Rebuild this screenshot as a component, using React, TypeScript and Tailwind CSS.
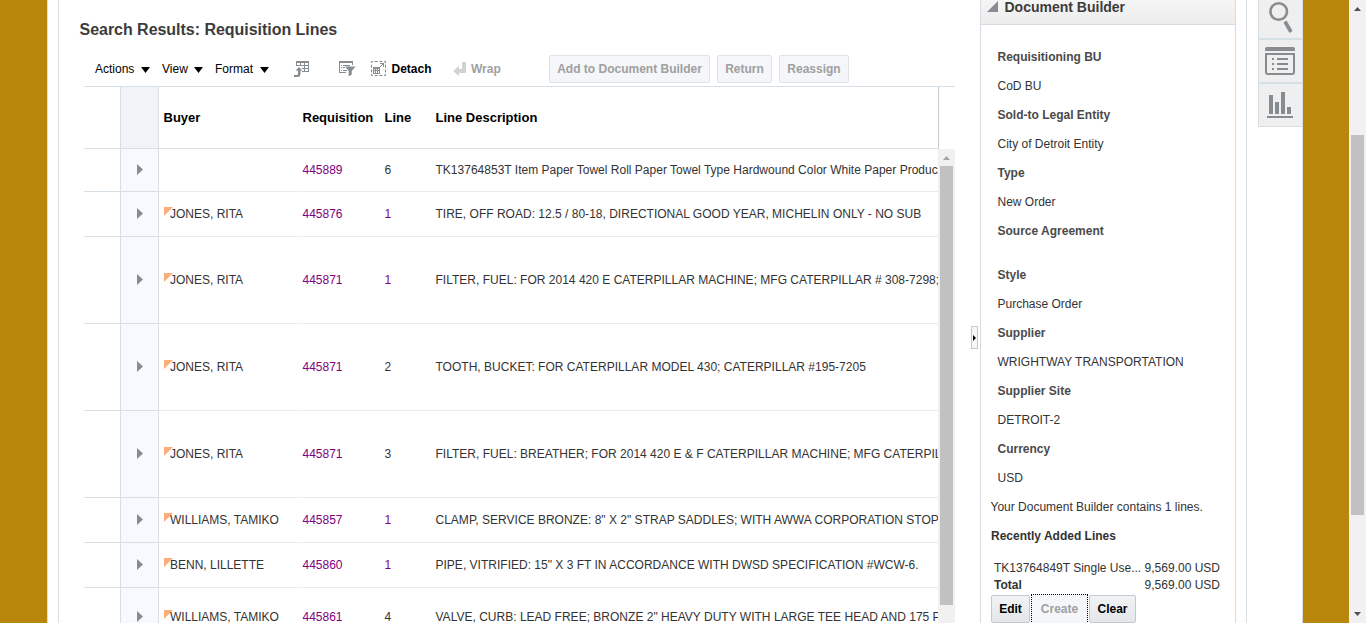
import React from "react";

type Row = { h: string; buyer?: string; req: string; line: string; lineColor?: string; desc: string };

const rows: Row[] = [
  { h: "h-[43px]", req: "445889", line: "6", desc: "TK13764853T Item Paper Towel Roll Paper Towel Type Hardwound Color White Paper Produc" },
  { h: "h-[45px]", buyer: "JONES, RITA", req: "445876", line: "1", lineColor: "text-[#800080]", desc: "TIRE, OFF ROAD: 12.5 / 80-18, DIRECTIONAL GOOD YEAR, MICHELIN ONLY - NO SUB" },
  { h: "h-[87px]", buyer: "JONES, RITA", req: "445871", line: "1", lineColor: "text-[#800080]", desc: "FILTER, FUEL: FOR 2014 420 E CATERPILLAR MACHINE; MFG CATERPILLAR # 308-7298;" },
  { h: "h-[87px]", buyer: "JONES, RITA", req: "445871", line: "2", desc: "TOOTH, BUCKET: FOR CATERPILLAR MODEL 430; CATERPILLAR #195-7205" },
  { h: "h-[87px]", buyer: "JONES, RITA", req: "445871", line: "3", desc: "FILTER, FUEL: BREATHER; FOR 2014 420 E & F CATERPILLAR MACHINE; MFG CATERPIL" },
  { h: "h-[45px]", buyer: "WILLIAMS, TAMIKO", req: "445857", line: "1", lineColor: "text-[#800080]", desc: "CLAMP, SERVICE BRONZE: 8\" X 2\" STRAP SADDLES; WITH AWWA CORPORATION STOP" },
  { h: "h-[45px]", buyer: "BENN, LILLETTE", req: "445860", line: "1", lineColor: "text-[#800080]", desc: "PIPE, VITRIFIED: 15\" X 3 FT IN ACCORDANCE WITH DWSD SPECIFICATION #WCW-6." },
  { h: "h-[58px]", buyer: "WILLIAMS, TAMIKO", req: "445861", line: "4", desc: "VALVE, CURB: LEAD FREE; BRONZE 2\" HEAVY DUTY WITH LARGE TEE HEAD AND 175 P" },
];

const fields: { label: string; value: string; h: string }[] = [
  { label: "Requisitioning BU", value: "CoD BU", h: "h-[58px]" },
  { label: "Sold-to Legal Entity", value: "City of Detroit Entity", h: "h-[58px]" },
  { label: "Type", value: "New Order", h: "h-[58px]" },
  { label: "Source Agreement", value: "", h: "h-[44px]" },
  { label: "Style", value: "Purchase Order", h: "h-[58px]" },
  { label: "Supplier", value: "WRIGHTWAY TRANSPORTATION", h: "h-[58px]" },
  { label: "Supplier Site", value: "DETROIT-2", h: "h-[58px]" },
  { label: "Currency", value: "USD", h: "h-[58px]" },
];

function Menu({ label, width }: { label: string; width: string }) {
  return (
    <div className={`flex items-center ${width}`}>
      <span className="flex-1">{label}</span>
      <svg width="9" height="6" viewBox="0 0 9 6" className="mt-[2px] shrink-0"><path d="M0 0H9L4.5 6Z" fill="#000" /></svg>
    </div>
  );
}

function FreezeIcon() {
  return (
    <svg width="16" height="16" viewBox="0 0 16 16" className="shrink-0">
      <path shapeRendering="crispEdges" d="M2 0H15V2H2ZM2 2H3V5H2ZM6 2H7V5H6ZM10 2H11V10H10ZM14 2H15V11H14ZM3 4H15V5H3ZM8 7H15V8H8ZM8 10H15V11H8Z" fill="#868c90" />
      <path d="M5 6L8.500 9.500H6.500V12.500C6.500 15 5.500 16 3.500 16H0V14H3Q4 14 4 12.500V9.500H1.500Z" fill="#868c90" />
    </svg>
  );
}

function QueryIcon() {
  return (
    <svg width="17" height="16" viewBox="0 0 17 16" className="shrink-0">
      <g fill="#868c90" shapeRendering="crispEdges">
        <path d="M0 0H14V4H13V2H1V11H7V12H0ZM2 4H3V5H2ZM4 4H11V5H4ZM2 6H3V7H2ZM4 6H6V7H4ZM2 9H3V10H2ZM4 9H8V10H4Z" />
      </g>
      <path d="M6 5.500H16.500L12.700 10V13.500L9.700 15.500V10Z" fill="#868c90" />
    </svg>
  );
}

function DetachIcon() {
  return (
    <svg width="15" height="15" viewBox="0 0 15 15" className="shrink-0">
      <rect x="0.5" y="0.5" width="14" height="14" fill="none" stroke="#868c90" strokeDasharray="3 1.667" strokeDashoffset="1.500" />
      <g shapeRendering="crispEdges" fill="#868c90">
        <path d="M2 6H9V13H2Z" />
        <path d="M3 8H4V9H3ZM5 8H6V9H5ZM7 8H8V9H7ZM3 10H4V12H3ZM5 10H6V12H5ZM7 10H8V12H7Z" fill="#fff" />
        <path d="M9 2H13V6H12V3H9ZM11 3H12V4H11ZM10 4H11V5H10ZM9 5H10V6H9Z" />
      </g>
    </svg>
  );
}

function Disabled({ children, w }: { children: React.ReactNode; w: string }) {
  return (
    <button className={`flex h-[28px] items-center justify-center rounded-[2px] border border-[#dfe4ea] bg-[#f4f6f9] font-bold text-[#a0a0a0] ${w}`}>
      {children}
    </button>
  );
}

function TableRow({ r }: { r: Row }) {
  return (
    <div className={`flex w-[854px] shrink-0 ${r.h}`}>
      <div className="w-[36px] shrink-0 border-b border-[#d6dfe6]" />
      <div className="flex w-[39px] shrink-0 items-center border-x border-b border-[#d6dfe6] bg-[#f8f9fe] pl-[16px]">
        <svg width="6" height="11" viewBox="0 0 6 11" className="mb-px"><path d="M0 0L6 5.500L0 11Z" fill="#868c90" /></svg>
      </div>
      <div className="flex w-[138px] shrink-0 items-center border-b border-[#ebebeb] pl-[5px]">
        {r.buyer && (
          <>
            <svg width="9" height="9" viewBox="0 0 9 9" className="-mr-[3px] mb-[5px] shrink-0"><path d="M0 0H9L0 9Z" fill="#fbae7c" /></svg>
            <span className="relative whitespace-nowrap">{r.buyer}</span>
          </>
        )}
      </div>
      <div className="ml-px flex w-[82px] shrink-0 items-center border-b border-[#ebebeb] pl-[4.5px] text-[#800080]">{r.req}</div>
      <div className={`flex w-[50px] shrink-0 items-center border-b border-[#ebebeb] pl-[4.5px] ${r.lineColor ?? ""}`}>{r.line}</div>
      <div className="flex min-w-0 flex-1 items-center overflow-hidden border-b border-[#ebebeb] pl-[5.5px] tracking-[0.01px] whitespace-nowrap">{r.desc}</div>
    </div>
  );
}

function ResultsTable() {
  return (
    <div className="mt-[2px] ml-[25px] flex min-h-0 w-[871px] flex-1 flex-col border-t border-[#d6dfe6]">
      <div className="flex h-[62px] w-[855px] shrink-0 items-stretch border-r border-b border-r-[#c4ccd2] border-b-[#d6dfe6] text-[13px] font-bold text-black">
        <div className="w-[36px]" />
        <div className="w-[39px] border-x border-[#d6dfe6] bg-[#f2f3f8]" />
        <div className="flex w-[139px] items-center pl-[4.5px]">Buyer</div>
        <div className="flex w-[82px] items-center pl-[4.5px]">Requisition</div>
        <div className="flex w-[50px] items-center pl-[4.5px]">Line</div>
        <div className="flex items-center pl-[5.5px]">Line Description</div>
      </div>
      <div className="flex min-h-0 flex-1">
        <div className="flex w-[854px] flex-col overflow-hidden">
          {rows.map((r, i) => <TableRow key={i} r={r} />)}
        </div>
        <div className="flex w-[17px] flex-col items-center bg-[#f1f1f1]">
          <svg width="7" height="4" viewBox="0 0 7 4" className="mt-[7px] mb-[6px] shrink-0"><path d="M0 4L3.500 0L7 4Z" fill="#a3a3a3" /></svg>
          <div className="h-[439px] w-[13px] shrink-0 bg-[#c1c1c1]" />
        </div>
      </div>
    </div>
  );
}

function Builder() {
  return (
    <aside className="flex w-[256px] shrink-0 flex-col border-x border-[#d6dce2]">
      <header className="flex h-[25px] shrink-0 items-start border-b border-[#d6dce2] bg-gradient-to-b from-[#f5f5f5] to-[#ededed] pl-[6px]">
        <svg width="11" height="11" viewBox="0 0 11 11" className="mt-px"><path d="M11 0V11H0Z" fill="#868c90" /></svg>
        <span className="-mt-px ml-[6.5px] text-[14px] leading-4 font-bold text-[#3c3c3c]">Document Builder</span>
      </header>
      <dl className="mt-[25px] ml-[16.5px] leading-[15px]">
        {fields.map((f) => (
          <div key={f.label} className={f.h}>
            <dt className="mb-[14px] font-bold text-[#4a4a4a]">{f.label}</dt>
            <dd className="whitespace-nowrap">{f.value}</dd>
          </div>
        ))}
      </dl>
      <p className="ml-[9.5px] leading-[15px] whitespace-nowrap">Your Document Builder contains 1 lines.</p>
      <h3 className="mt-[13px] ml-[10px] leading-4 font-bold">Recently Added Lines</h3>
      <div className="mt-[16px] ml-[13px] flex w-[226px] shrink-0 justify-between leading-[17px] whitespace-nowrap">
        <span>TK13764849T Single Use...</span><span>9,569.00 USD</span>
      </div>
      <div className="ml-[13px] flex w-[226px] shrink-0 justify-between leading-[17px]">
        <span className="font-bold">Total</span><span>9,569.00 USD</span>
      </div>
      <div className="ml-[10px] flex shrink-0 font-bold text-black">
        <button className="mt-px h-[28px] w-[39px] rounded-[2px] border border-[#c1c9d0] bg-gradient-to-b from-[#f1f3f4] to-[#e3e7ea]">Edit</button>
        <button className="ml-px h-[30px] w-[57px] border border-dotted border-black bg-[#f4f6f9] text-[#a0a0a0]">Create</button>
        <button className="mt-px ml-px h-[28px] w-[47px] rounded-[2px] border border-[#c1c9d0] bg-gradient-to-b from-[#f1f3f4] to-[#e3e7ea]">Clear</button>
      </div>
    </aside>
  );
}

function SideTabs() {
  return (
    <nav className="ml-[11px] flex w-[45px] flex-col">
      <div className="h-[40px] border-b-2 border-l border-[#d6dfe4] bg-[#efefef] pl-[10px]">
        <svg width="26" height="34" viewBox="0 0 26 34">
          <circle cx="9.700" cy="11.500" r="8.300" fill="none" stroke="#868c90" strokeWidth="2.600" />
          <path d="M16 21.500L22 32" stroke="#868c90" strokeWidth="3.600" />
        </svg>
      </div>
      <div className="h-[44px] border-b-2 border-l border-[#d6dfe4] bg-[#efefef] pt-[7px] pl-[6px]">
        <svg width="30" height="28" viewBox="0 0 30 28">
          <path d="M0 4V2Q0 0 2 0H28Q30 0 30 2V4Z" fill="#868c90" />
          <path d="M1 7H29V25Q29 27 27 27H3Q1 27 1 25Z" fill="none" stroke="#868c90" strokeWidth="2" />
          <path d="M7 11H9V13H7ZM12 11H23V13H12ZM7 16H9V18H7ZM12 16H23V18H12ZM7 21H9V23H7ZM12 21H23V23H12Z" fill="#868c90" />
        </svg>
      </div>
      <div className="h-[43px] border-b border-l border-[#d6dfe4] bg-[#efefef] pt-[8px] pl-[8px]">
        <svg width="26" height="26" viewBox="0 0 26 26">
          <path d="M2 3H6V22H2ZM8 10H12V22H8ZM14 0H18V22H14ZM20 15H24V22H20ZM0 24H26V26H0Z" fill="#868c90" />
        </svg>
      </div>
    </nav>
  );
}

export default function App() {
  return (
    <div className="flex h-[623px] w-[1366px] overflow-hidden bg-white font-['Liberation_Sans',Arial,sans-serif] text-[12px] text-[#333]">
      <div className="w-[48px] shrink-0 border-r border-[#d9dfe3] bg-[#b8860b]" />
      <div className="ml-[10px] flex w-[1189px] shrink-0 border-x border-[#d6dfe6]">
        <main className="flex w-[896px] flex-col">
          <h1 className="mt-[20px] ml-[20.5px] shrink-0 text-[16px] leading-[20px] font-bold tracking-[-0.03px] text-[#3c3c3c]">Search Results: Requisition Lines</h1>
          <div className="mt-[14px] flex h-[30px] shrink-0 items-center text-black">
            <div className="ml-[36px] flex gap-[12px]">
              <Menu label="Actions" width="w-[55px]" />
              <Menu label="View" width="w-[41px]" />
              <Menu label="Format" width="w-[54px]" />
            </div>
            <div className="mt-[7px] ml-[25px] self-start"><FreezeIcon /></div>
            <div className="mt-[7px] ml-[29px] self-start"><QueryIcon /></div>
            <div className="mt-[7px] ml-[15px] self-start"><DetachIcon /></div>
            <span className="ml-[5.5px] w-[61.5px] font-bold">Detach</span>
            <svg width="13" height="14" viewBox="0 0 13 14" className="shrink-0"><path d="M9 0H13V11H6V14L0 9L6 4V7H9Z" fill="#d0d3d5" /></svg>
            <span className="ml-[5px] w-[78px] font-bold text-[#a0a0a0]">Wrap</span>
            <div className="flex gap-[7px]">
              <Disabled w="w-[161px]">Add to Document Builder</Disabled>
              <Disabled w="w-[55px]">Return</Disabled>
              <Disabled w="w-[70px]">Reassign</Disabled>
            </div>
          </div>
          <ResultsTable />
        </main>
        <div className="ml-[16px] flex w-[9px] shrink-0 flex-col pt-[326px]">
          <div className="flex h-[23px] w-[7px] items-center justify-center border border-[#bccad4] bg-[#f5f7f9]">
            <svg width="3" height="6" viewBox="0 0 3 6" className="shrink-0"><path d="M0 0L3 3L0 6Z" fill="#000" /></svg>
          </div>
        </div>
        <Builder />
      </div>
      <SideTabs />
      <div className="-ml-px w-[47px] shrink-0 border-l border-[#d6dfe4] bg-[#b8860b]" />
      <div className="flex w-[17px] shrink-0 flex-col items-center bg-[#f1f1f1]">
        <svg width="7" height="4" viewBox="0 0 7 4" className="mt-[7px] shrink-0"><path d="M0 4L3.500 0L7 4Z" fill="#505050" /></svg>
        <div className="mt-[124px] h-[380px] w-[13px] bg-[#c1c1c1]" />
        <svg width="7" height="4" viewBox="0 0 7 4" className="mt-auto mb-[7px] shrink-0"><path d="M0 0H7L3.500 4Z" fill="#505050" /></svg>
      </div>
    </div>
  );
}
